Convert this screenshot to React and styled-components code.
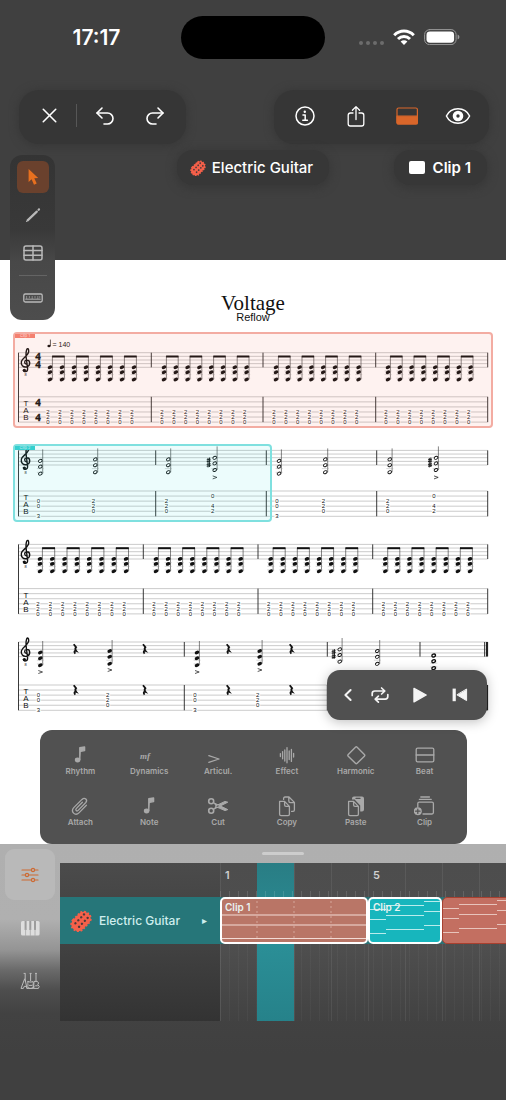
import React from 'react';
import styled, { createGlobalStyle } from 'styled-components';
import { X, Undo2, Redo2 } from 'lucide-react';

const GlobalStyle = createGlobalStyle`
  * {
    box-sizing: border-box;
  }

  body {
    margin: 0;
    background: #404040;
    color: #fff;
    font-family: Inter, "Liberation Sans", sans-serif;
  }

  button {
    border: 0;
    padding: 0;
    background: none;
    color: inherit;
    font: inherit;
    cursor: pointer;
  }

  svg {
    display: block;
  }
`;

/* ---------- icons ---------- */

const Icon = ({ size = 24, width, children, ...rest }) =>
  <svg
    width={width || size}
    height={size}
    viewBox={`0 0 ${width || size} ${size}`}
    fill="none"
    stroke="currentColor"
    strokeWidth="1.5"
    strokeLinecap="round"
    strokeLinejoin="round"
    aria-hidden="true"
    {...rest}
  >
    {children}
  </svg>

const WifiIcon = () =>
  <Icon width={22} size={16} strokeWidth="3" strokeLinecap="butt">
    <path d="M1.2 6.2 C6.8 .7 15.2 .7 20.8 6.2" />
    <path d="M5 10 C8.4 6.7 13.6 6.7 17 10" />
    <path d="M7.6 12.6 C9.6 10.8 12.4 10.8 14.4 12.6 L11 16 Z" fill="currentColor" stroke="none" />
  </Icon>

const BatteryIcon = () =>
  <Icon width={36} size={16} strokeWidth="1">
    <rect x=".6" y=".6" width="31.5" height="15" rx="5" stroke="#9a9a9a" />
    <rect x="2.5" y="2.5" width="27.6" height="11.2" rx="3.4" fill="#fff" stroke="none" />
    <path d="M33.6 5.6 C36 6.4 36 9.8 33.6 10.6 Z" fill="#9a9a9a" stroke="none" />
  </Icon>

const InfoIcon = () =>
  <Icon>
    <circle cx="12" cy="12" r="9" />
    <circle cx="11.8" cy="7.8" r="1.2" fill="currentColor" stroke="none" />
    <path d="M10 11 H12.2 V16 M9.8 16.2 H14.4" />
  </Icon>

const ShareIcon = () =>
  <Icon strokeWidth="1.3">
    <path d="M9 9 H6.4 Q4.2 9 4.2 11.2 V19.8 Q4.2 22 6.4 22 H17.6 Q19.8 22 19.8 19.8 V11.2 Q19.8 9 17.6 9 H15" />
    <path d="M12 15.5 V3 M8.4 6.2 L12 2.6 L15.6 6.2" />
  </Icon>

const PanelIcon = () =>
  <Icon stroke="#d9662a" strokeWidth="1.2">
    <rect x="2" y="4" width="20.4" height="16" rx="1.6" />
    <path d="M2 12.2 H22.4 V18.4 Q22.4 20 20.8 20 H3.6 Q2 20 2 18.4 Z" fill="#d9662a" />
  </Icon>

const EyeIcon = () =>
  <Icon width={26} size={24} strokeWidth="1.5">
    <path d="M1.4 12 C6 2.4 20 2.4 24.6 12 C20 21.6 6 21.6 1.4 12 Z" />
    <circle cx="13" cy="12" r="3.5" strokeWidth="3.6" />
  </Icon>

const CursorIcon = () =>
  <Icon>
    <path d="M7.6 4 V17 L10.6 14.3 L13 19.8 L15.7 18.6 L13.3 13.3 L17.2 12.9 Z" fill="#e8701f" stroke="none" />
  </Icon>

const PencilIcon = () =>
  <Icon strokeWidth="2.2">
    <path d="M6.6 17.4 L15.8 8.6" />
    <path d="M17.6 6.8 L18 6.4" />
    <path d="M5.4 18.6 L6.6 17.4" strokeWidth="1" />
  </Icon>

const TableIcon = () =>
  <Icon>
    <rect x="3" y="5" width="18" height="14" rx="2" />
    <path d="M3 9.6 H21 M3 14.3 H21 M12 5 V19" />
  </Icon>

const RulerIcon = () =>
  <Icon>
    <rect x="2.8" y="8" width="18.4" height="8" rx="1.4" strokeWidth="1.3" />
    <path d="M5.6 10.4 V12.6 M8.4 10.4 V11.8 M11.2 10.4 V12.6 M14 10.4 V11.8 M16.8 10.4 V12.6 M18.8 10.4 V11.8" strokeWidth=".8" opacity=".7" />
    <path d="M4.8 13.2 H19.2" strokeWidth="1.4" opacity=".6" />
  </Icon>

const GuitarIcon = ({ size }) =>
  <svg width={size} height={size} viewBox="0 0 20 20" aria-hidden="true">
    <g transform="rotate(-46 10 10)">
      <rect x="0" y="4.2" width="19.4" height="12.2" rx="5.6" fill="#f5604a" />
      <rect x="0" y="4.2" width="19.4" height="12.2" rx="5.6" fill="none" stroke="#f5604a" strokeWidth="1.8" strokeDasharray="1.7 1.5" />
      {[5, 8.8, 12.6, 16.2].map(x => [7.8, 12.4].map(y =>
        <circle key={`${x}-${y}`} cx={x} cy={y} r="1.1" fill="#4b3a3a" />
      ))}
    </g>
  </svg>

const NoteIcon = () =>
  <Icon size={22}>
    <path d="M10.8 15.4 V3.8 L15.6 3 V6.6 L11.8 7.2" fill="currentColor" strokeWidth="1.4" />
    <ellipse cx="8.6" cy="16" rx="2.8" ry="2.4" fill="currentColor" stroke="none" />
  </Icon>

const DynamicsIcon = () =>
  <Icon size={22}>
    <text x="2" y="15" fontFamily="Liberation Serif, serif" fontSize="9" fontWeight="700" fontStyle="italic" fill="currentColor" stroke="none">mf</text>
  </Icon>

const AccentIcon = () =>
  <Icon size={22} strokeWidth="1.3">
    <path d="M1.8 11.6 L12 15 L1.8 18.4" />
  </Icon>

const EffectIcon = () =>
  <Icon size={22} strokeWidth="1.3">
    <path d="M4.4 9.6 V12.6 M6.6 7.6 V14.8 M8.8 6 V17 M11 3.6 V18.8 M13.2 7 V15.6 M15.4 5.4 V17.4 M17.6 9.4 V13" />
  </Icon>

const HarmonicIcon = () =>
  <Icon size={22}>
    <rect x="5" y="5" width="12.6" height="12.6" rx="1.2" transform="rotate(45 11.3 11.3)" strokeWidth="1.4" />
  </Icon>

const BeatIcon = () =>
  <Icon size={22}>
    <rect x="2.2" y="4.2" width="17.6" height="13.6" rx="1.4" strokeWidth="1.3" />
    <path d="M2.2 11 H19.8" strokeWidth="1.3" />
  </Icon>

const AttachIcon = () =>
  <Icon size={22} strokeWidth="1.3">
    <path d="M13.4 7.2 L7.2 13.6 C6 15 7.8 16.8 9.2 15.4 L16.6 7.8 C19.2 5 15.8 1.8 13 4.4 L5 12.4 C1 16.8 6.2 21.6 10.2 17.6 L17.4 10.2" />
  </Icon>

const CutIcon = () =>
  <Icon size={22} strokeWidth="1.6">
    <circle cx="4.2" cy="6.2" r="2.5" />
    <circle cx="4.2" cy="15.8" r="2.5" />
    <path d="M6.4 7.6 L20.8 14.6 L18 15.6 L8.8 11.6 M6.4 14.4 L20.8 7.2 L18 6.4 L8.8 10.8" fill="currentColor" strokeWidth="1" />
  </Icon>

const PageFront = () =>
  <path d="M3.6 6.4 H8.6 L13.4 11.4 V19.2 Q13.4 20.6 12 20.6 H5 Q3.6 20.6 3.6 19.2 Z M8.6 6.4 V10 Q8.6 11.4 10 11.4 H13.4" strokeWidth="1.3" />

const CopyIcon = () =>
  <Icon size={22}>
    <path d="M7.6 4.4 V3.4 Q7.6 2 9 2 H13 L18.4 7.4 V15 Q18.4 16.4 17 16.4 H15.6 M12.8 2.2 V6 Q12.8 7.6 14.4 7.6 H18" strokeWidth="1.3" />
    <PageFront />
  </Icon>

const PasteIcon = () =>
  <Icon size={22}>
    <path d="M7 4.4 V3.4 Q7 1.4 9 1.4 H17 Q19 1.4 19 3.4 V14.6 Q19 16.6 17 16.6 H15.2 V10.6 L9.6 4.6 Z" fill="currentColor" stroke="none" />
    <path d="M11 3.4 H15" stroke="#515151" strokeWidth="1.2" />
    <PageFront />
  </Icon>

const ClipIcon = () =>
  <Icon size={22} strokeWidth="1.3">
    <path d="M6.8 2 H15.4 M5.4 4.4 H17.2" />
    <path d="M3.8 12 V8.6 Q3.8 7.2 5.2 7.2 H18 Q19.4 7.2 19.4 8.6 V17.6 Q19.4 19 18 19 H9" />
    <circle cx="3.8" cy="16.2" r="4" fill="currentColor" stroke="none" />
    <path d="M3.8 14 V18.4 M1.6 16.2 H6" stroke="#515151" strokeWidth="1.2" />
  </Icon>

const BackIcon = () =>
  <Icon strokeWidth="2">
    <path d="M14.6 7 L9.4 12 L14.6 17" />
  </Icon>

const LoopIcon = () =>
  <Icon strokeWidth="1.7">
    <path d="M4.2 12.4 V10.6 Q4.2 8 6.8 8 H16 M13.6 5 L16.8 8 L13.6 11" />
    <path d="M19.8 11.6 V13.6 Q19.8 16.2 17.2 16.2 H8 M10.4 13.2 L7.2 16.2 L10.4 19.2" />
  </Icon>

const PlayIcon = () =>
  <Icon>
    <path d="M6 5.4 L18.2 12 L6 18.8 Z" fill="currentColor" strokeWidth="1.4" />
  </Icon>

const RewindIcon = () =>
  <Icon>
    <rect x="4.6" y="5.6" width="3.2" height="12.6" fill="currentColor" stroke="none" />
    <path d="M18.6 6.4 V17.6 L9.2 12 Z" fill="currentColor" strokeWidth="1" />
  </Icon>

const MixerIcon = () =>
  <Icon stroke="#cd6a33" strokeWidth="1.2">
    <path d="M4 7 H20 M4 12 H20 M4 17 H20" />
    <g fill="#b8b8b8">
      <circle cx="15" cy="7" r="1.6" />
      <circle cx="9" cy="12" r="1.6" />
      <circle cx="15" cy="17" r="1.6" />
    </g>
  </Icon>

const KeysIcon = () =>
  <Icon stroke="none">
    <rect x="3" y="5" width="18.6" height="14.6" rx="1.6" fill="#dedede" />
    <path d="M7.6 5 V14 M12.3 5 V14 M17 5 V14" stroke="#9d9d9d" strokeWidth="2" strokeLinecap="butt" />
    <path d="M7.6 13 V19.6 M12.3 13 V19.6 M17 13 V19.6" stroke="#a8a8a8" strokeWidth=".8" />
  </Icon>

const GuitarsIcon = () =>
  <Icon strokeWidth="1" stroke="#bdbdbd">
    <path d="M7.2 5 V12 M12.6 5 V12 M18 5 V12 M6 4.4 H7.2 M12 4.4 H13.2 M17.4 4.4 H18.6" />
    <path d="M6.6 10 L3 19.4 H5.4 L6.2 17.4 H8.6 L9 19.4 H15.4 L16 17.8 M9 19.4 L7.2 11" />
    <path d="M10 12.6 Q9.6 15 10 16 Q9 19.2 12.4 19.4 Q16 19.2 15 16 Q15.6 14 15 12.6 Q12.6 13.8 10 12.6 Z" />
    <path d="M16.4 12.4 H19.4 Q21.6 14 19.8 15.6 Q22.4 17.4 20.4 19.4 H16 Z M11.4 16.4 H13.8 M17.6 16.8 H19.4" />
  </Icon>

/* ---------- header ---------- */

const Header = styled.header`
  height: 260px;
  padding-top: 16px;
`;

const StatusBar = styled.div`
  display: grid;
  grid-template-columns: 1fr 144px 1fr;
  height: 74px;
`;

const Clock = styled.div`
  padding: 9px 0 0 12px;
  font-size: 21px;
  line-height: 26px;
  font-weight: 600;
  text-align: center;
`;

const Island = styled.div`
  height: 43px;
  border-radius: 22px;
  background: #000;
`;

const Signals = styled.div`
  display: flex;
  justify-content: flex-end;
  gap: 9px;
  padding: 13px 46px 0 0;
`;

const Dots = styled.div`
  display: flex;
  gap: 3px;
  padding-top: 12px;

  i {
    width: 4px;
    height: 4px;
    border-radius: 2px;
    background: #6c6c6c;
  }
`;

const ToolbarRow = styled.div`
  display: flex;
  justify-content: space-between;
  padding: 0 17px 0 19px;
`;

const Toolbar = styled.div`
  display: flex;
  align-items: center;
  height: 54px;
  padding: 0 6px 3px 5px;
  border-radius: 20px;
  background: #363636;
  box-shadow: 0 1px 9px 1px #373737;
`;

const ToolButton = styled.button`
  display: flex;
  align-items: center;
  justify-content: center;
  width: ${props => props.$wide ? 51 : 50}px;
  height: 44px;
`;

const Divider = styled.div`
  width: 1px;
  height: 23px;
  margin: 0 3px 0 2px;
  background: #575757;
`;

const ChipRow = styled.div`
  display: grid;
  grid-template-columns: 1fr auto 1fr;
  align-items: start;
  padding: 6px 19px 0;
`;

const Chip = styled.button`
  display: flex;
  align-items: center;
  gap: 6px;
  height: 35px;
  padding: 0 16px 0 13px;
  border-radius: 16px;
  background: #373737;
  box-shadow: 0 2px 9px 2px #383838;
  font-size: 15px;
  font-weight: ${props => props.$end ? 600 : 500};
  grid-column: ${props => props.$end ? 3 : 2};
  justify-self: ${props => props.$end ? 'end' : 'center'};
`;

const Swatch = styled.span`
  width: 16px;
  height: 13px;
  margin: 0 2px;
  border-radius: 2px;
  background: #fff;
`;

const Palette = styled.nav`
  position: absolute;
  top: 155px;
  left: 10px;
  z-index: 2;
  display: flex;
  flex-direction: column;
  align-items: center;
  gap: 6px;
  width: 45px;
  padding: 6px 0;
  border-radius: 12px;
  background: linear-gradient(#343434, #393939 45%, #484848 65%, #4d4d4d);
  color: #b9b9b9;

  hr {
    width: 28px;
    height: 1px;
    margin: 0;
    border: 0;
    background: #646464;
  }
`;

const PaletteButton = styled.button`
  display: flex;
  align-items: center;
  justify-content: center;
  width: 32px;
  height: 32px;
  border-radius: 6px;
  background: ${props => props.$active ? '#6a412d' : 'none'};
`;

/* ---------- score ---------- */

const Sheet = styled.main`
  padding-top: 30px;
  background: #fff;
  color: #111;
`;

const Title = styled.h1`
  margin: 0;
  font: 400 21px/26px "Liberation Serif", serif;
  text-align: center;
`;

const Subtitle = styled.p`
  margin: -4px 0 9px;
  font: 400 11px/11px "Liberation Sans", sans-serif;
  text-align: center;
`;

const Systems = styled.div`
  display: flex;
  flex-direction: column;
  gap: 16px;
  padding: 0 13px;
`;

const SystemBox = styled.div`
  position: relative;

  > svg {
    width: 100%;
    height: auto;
  }
`;

const ClipFrame = styled.div`
  position: absolute;
  top: 0;
  left: 0;
  width: ${props => props.$width};
  height: 100%;
  border: 2px solid ${props => props.$line};
  border-radius: 4px;
  background: ${props => props.$fill};

  span {
    display: block;
    width: 20px;
    height: 4px;
    background: ${props => props.$tab};
    color: rgba(255, 255, 255, 0.7);
    font-size: 4px;
    line-height: 3px;
    text-align: center;
  }
`;

const STAFF_GAP = 3.65;
const TAB_GAP = 5.06;
const LEFT = 18.5;
const RIGHT = 487.7;

// tab figures as [line, fret]
const SHAPES = {
  power: { notes: [14.5, 19.5, 26.8], tab: [[3, 2], [4, 2], [5, 0]] },
  g: { notes: [10.5, 16.2, 23.2], tab: [[2, 0], [3, 0], [5, 3]], accent: 30 },
  a: { notes: [9, 14.8, 21.8], tab: [[2, 2], [3, 2], [4, 0]], accent: 28 },
  b: { notes: [7.4, 13, 19.6], tab: [[1, 0], [3, 4], [4, 2]], accent: 27, sharps: true },
};

const Clef = ({ y }) =>
  <g transform={`translate(26 ${y})`} fill="none" stroke="#111" strokeWidth="1.4" strokeLinecap="round">
    <path d="M.2 11.4 C-2 10.8 -1.8 7.6 .6 7.4 C4.4 7.2 5 12.8 .8 14.2 C-3 15 -5.4 12 -4.6 8.8 C-3.6 4.8 2.6 3 2.7 -1.4 C2.7 -4.4 1.4 -4.8 .6 -2.8 C-.6 .4 0 4 .6 8 L1.6 16 C1.8 19.4 -2.4 19.8 -2.6 17.4" />
    <circle cx="-1.6" cy="17.6" r="1.6" fill="#111" stroke="none" />
    <text x="-.4" y="23.6" fontSize="4" fill="#111" stroke="none" textAnchor="middle">8</text>
  </g>

const Figure = ({ x, y, children }) =>
  <text x={x} y={y + 2} fontSize="6" textAnchor="middle" stroke="#fff" strokeWidth="2" paintOrder="stroke">{children}</text>

const Rest = ({ x, y }) =>
  <path
    transform={`translate(${x} ${y})`}
    d="M-1 -4.8 L1.4 -1.8 C.2 -.6 .2 .4 1.6 2 C-.6 1.4 -.8 2.8 .6 4.6"
    fill="none"
    stroke="#111"
    strokeWidth="1.8"
  />

const Sharp = ({ x, y }) =>
  <path transform={`translate(${x} ${y})`} d="M-.7 -2.4 V2.4 M.8 -2.8 V2 M-2 -.6 L2 -1.2 M-2 1.2 L2 .6" stroke="#111" strokeWidth=".9" />

const Chord = ({ x, staff, tab, shape, open, whole, accent, stem, raised = 1 }) => {
  const { notes, tab: frets, accent: accentY, sharps } = SHAPES[shape];
  const stemTop = stem === undefined ? -raised : stem;
  return (
    <g>
      {!whole && <path d={`M${x + 2.4} ${staff + stemTop} V${staff + notes[2]}`} stroke="#333" strokeWidth=".6" />}
      {[18.2, 21.9, 25.5].filter(l => l < notes[2]).map(l =>
        <path key={l} d={`M${x - 3.4} ${staff + l} H${x + 3.6}`} stroke="#999" strokeWidth=".4" />
      )}
      {notes.map(n =>
        <ellipse
          key={n}
          cx={x}
          cy={staff + n}
          rx={open ? 1.9 : 2.4}
          ry={open ? 1.4 : 1.7}
          transform={`rotate(-24 ${x} ${staff + n})`}
          fill={open ? '#fff' : '#111'}
          stroke={open ? '#111' : 'none'}
          strokeWidth={whole ? 1.4 : 0.9}
        />
      )}
      {sharps && <><Sharp x={x - 6} y={staff + 10} /><Sharp x={x - 6} y={staff + 14.6} /></>}
      {accent && <path d={`M${x - 2} ${staff + accentY - 1.5} L${x + 2.2} ${staff + accentY} L${x - 2} ${staff + accentY + 1.5}`} fill="none" stroke="#111" strokeWidth=".7" />}
      {!whole && frets.map(([line, fret]) =>
        <Figure key={line} x={x - 2} y={tab + line * TAB_GAP}>{fret}</Figure>
      )}
    </g>
  );
};

// a bar of eighth notes beamed in pairs
const EighthBar = ({ start, step, staff, tab }) =>
  <g>
    {[0, 1, 2, 3, 4, 5, 6, 7].map(i =>
      <Chord key={i} x={start + i * step} staff={staff} tab={tab} shape="power" stem={3.5} />
    )}
    {[0, 2, 4, 6].map(i =>
      <path key={i} d={`M${start + i * step + 2.1} ${staff + 3.8} H${start + (i + 1) * step + 2.7}`} stroke="#111" strokeWidth="2" />
    )}
  </g>

const System = ({ height, staff, tab, bars, meter, final, frame, children }) => {
  const staffEnd = staff + 4 * STAFF_GAP;
  const tabEnd = tab + 5 * TAB_GAP;
  return (
    <SystemBox>
      <svg viewBox={`13 0 480 ${height}`} fontFamily="Liberation Sans, sans-serif" fill="#111">
        <g stroke="#a8a8a8" strokeWidth=".6">
          {[0, 1, 2, 3, 4].map(i => <path key={i} d={`M${LEFT} ${staff + i * STAFF_GAP} H${RIGHT}`} />)}
          {[0, 1, 2, 3, 4, 5].map(i => <path key={i} d={`M${LEFT} ${tab + i * TAB_GAP} H${RIGHT}`} />)}
        </g>
        <g stroke="#222" strokeWidth=".9">
          <path d={`M${LEFT} ${staff} V${tabEnd}`} />
          {bars.map(x => <path key={x} d={`M${x} ${staff} V${staffEnd} M${x} ${tab} V${tabEnd}`} />)}
          {final && <path d={`M487 ${staff} V${staffEnd} M487 ${tab} V${tabEnd}`} strokeWidth="2.2" />}
        </g>
        <Clef y={staff} />
        <g fontSize="8" textAnchor="middle">
          <text x="26" y={tab + 9}>T</text>
          <text x="26" y={tab + 16}>A</text>
          <text x="26" y={tab + 23}>B</text>
        </g>
        {meter &&
          <g fontFamily="Liberation Serif, serif" fontSize="11" fontWeight="700" textAnchor="middle" stroke="#111" strokeWidth=".4">
            <text x="38" y={staff + 7}>4</text>
            <text x="38" y={staff + 15}>4</text>
            <text x="38" y={tab + 9}>4</text>
            <text x="38" y={tab + 24}>4</text>
          </g>
        }
        {children}
      </svg>
      {frame}
    </SystemBox>
  );
};

const Score = () =>
  <Systems>
    <System
      height={96}
      staff={20.7}
      tab={64.8}
      bars={[151.3, 263, 375.7, RIGHT]}
      meter
      frame={
        <ClipFrame $width="100%" $line="#f3aca2" $tab="#f4806f" $fill="rgba(246, 110, 86, 0.09)">
          <span>Clip 1</span>
        </ClipFrame>
      }
    >
      <ellipse cx="49" cy="14" rx="1.6" ry="1.2" />
      <path d="M50.4 14 V7.6" stroke="#111" strokeWidth=".7" />
      <text x="52.5" y="14.6" fontSize="7">= 140</text>
      <EighthBar start={50} step={12} staff={20.7} tab={64.8} />
      <EighthBar start={164} step={11.8} staff={20.7} tab={64.8} />
      <EighthBar start={276} step={11.8} staff={20.7} tab={64.8} />
      <EighthBar start={388} step={11.8} staff={20.7} tab={64.8} />
    </System>
    <System
      height={78}
      staff={6.4}
      tab={47}
      bars={[155.7, 266.3, 376.7, RIGHT]}
      frame={
        <ClipFrame $width="54%" $line="#7fe0df" $tab="#35cfcf" $fill="rgba(40, 225, 220, 0.09)">
          <span>Clip 2</span>
        </ClipFrame>
      }
    >
      <Chord x={40.3} staff={6.4} tab={47} shape="g" open />
      <Chord x={95.3} staff={6.4} tab={47} shape="a" open raised={2} />
      <Chord x={168.3} staff={6.4} tab={47} shape="a" open raised={2} />
      <Chord x={214.7} staff={6.4} tab={47} shape="b" open accent raised={4} />
      <Chord x={279} staff={6.4} tab={47} shape="g" open />
      <Chord x={325.3} staff={6.4} tab={47} shape="a" open raised={2} />
      <Chord x={389.7} staff={6.4} tab={47} shape="a" open raised={2} />
      <Chord x={436} staff={6.4} tab={47} shape="b" open accent raised={4} />
    </System>
    <System height={82} staff={6.4} tab={50.6} bars={[143.3, 258, 372.7, RIGHT]}>
      <EighthBar start={40} step={12.3} staff={6.4} tab={50.6} />
      <EighthBar start={156} step={12.1} staff={6.4} tab={50.6} />
      <EighthBar start={270.7} step={12.1} staff={6.4} tab={50.6} />
      <EighthBar start={385.3} step={12.1} staff={6.4} tab={50.6} />
    </System>
    <System height={80} staff={6} tab={49} bars={[184.3, 327.3, 420, 484.6]} final>
      <Chord x={40.3} staff={6} tab={49} shape="g" accent />
      <Chord x={109.7} staff={6} tab={49} shape="a" accent raised={2} />
      <Chord x={197} staff={6} tab={49} shape="g" accent />
      <Chord x={259.7} staff={6} tab={49} shape="a" accent raised={2} />
      {[74.7, 144, 227.7, 290.7].map(x =>
        <g key={x}>
          <Rest x={x} y={13} />
          <Rest x={x} y={54} />
        </g>
      )}
      <Chord x={339.7} staff={6} tab={49} shape="b" open raised={4} />
      <Chord x={377.3} staff={6} tab={49} shape="a" open raised={2} />
      <Chord x={433.7} staff={9} tab={49} shape="g" open whole />
    </System>
  </Systems>

/* ---------- floating controls ---------- */

const ControlsArea = styled.div`
  position: relative;
  padding: 14px 39px 0 40px;
`;

const Transport = styled.div`
  position: absolute;
  right: 19px;
  bottom: calc(100% - 4px);
  display: flex;
  align-items: center;
  width: 160px;
  height: 50px;
  padding: 0 7px 0 9px;
  border-radius: 13px;
  background: #505050;
  color: #f4f4f4;
  box-shadow: 0 2px 12px rgba(0, 0, 0, 0.25);
`;

const TransportButton = styled.button`
  display: flex;
  align-items: center;
  justify-content: center;
  width: ${props => props.$narrow ? 24 : 40}px;
  height: 40px;
`;

const ActionPanel = styled.div`
  display: grid;
  grid-template-columns: repeat(6, 1fr);
  row-gap: 19px;
  padding: 14px 8px 17px 6px;
  border-radius: 12px;
  background: #515151;
`;

const Action = styled.button`
  display: flex;
  flex-direction: column;
  align-items: center;
  color: #a9a9a9;
  font-size: 8px;
  font-weight: 600;
  line-height: 10px;
`;

const ACTIONS = [
  ['Rhythm', NoteIcon],
  ['Dynamics', DynamicsIcon],
  ['Articul.', AccentIcon],
  ['Effect', EffectIcon],
  ['Harmonic', HarmonicIcon],
  ['Beat', BeatIcon],
  ['Attach', AttachIcon],
  ['Note', NoteIcon],
  ['Cut', CutIcon],
  ['Copy', CopyIcon],
  ['Paste', PasteIcon],
  ['Clip', ClipIcon],
];

/* ---------- dock ---------- */

const Dock = styled.section`
  flex: 1;
  display: grid;
  grid-template-columns: 60px 1fr;
  align-items: start;
  min-height: 256px;
  background: linear-gradient(
    #afafaf, #b0b0b0 75px, #949494 106px, #6a6a6a 126px,
    #4e4e4e 146px, #424242 170px, #404040 210px
  );
`;

const Rail = styled.nav`
  display: flex;
  flex-direction: column;
  gap: 2px;
  padding: 5px;
`;

const RailButton = styled.button`
  display: flex;
  align-items: center;
  justify-content: center;
  height: 51px;
  border-radius: 9px;
  background: ${props => props.$active ? '#b9b9b9' : 'none'};
`;

const Handle = styled.div`
  display: flex;
  justify-content: center;
  height: 19px;
  padding-top: 8px;

  i {
    width: 42px;
    height: 3px;
    border-radius: 2px;
    background: #cdcdcd;
  }
`;

const Tracks = styled.div`
  display: grid;
  grid-template-columns: 160px 1fr;
  height: 158px;
`;

const TrackHeads = styled.div`
  padding-top: 34px;
  background: linear-gradient(#4b4b4b, #464646 34px, #424242 80px, #333);
`;

const TrackHead = styled.button`
  display: flex;
  align-items: center;
  gap: 7px;
  width: 100%;
  height: 47px;
  padding: 0 13px 0 10px;
  background: #267679;
  color: #cfeeee;
  font-size: 12px;
  font-weight: 500;

  b {
    margin-left: auto;
    font: 10px/1 "DejaVu Sans", sans-serif;
  }
`;

const Timeline = styled.div`
  position: relative;
  overflow: hidden;
  background:
    repeating-linear-gradient(90deg, rgba(255, 255, 255, 0.07) 0 1px, transparent 1px 37px),
    linear-gradient(#4d4d4d, #4f4f4f 80px, #424242);
`;

// faint beat lines under the track row
const BeatLines = styled.div`
  position: absolute;
  inset: 81px 0 0;
  background: repeating-linear-gradient(90deg, rgba(255, 255, 255, 0.03) 0 1px, transparent 1px 9px);
`;

const LoopRange = styled.div`
  position: absolute;
  top: 0;
  bottom: 0;
  left: 37px;
  width: 37px;
  background: linear-gradient(#297d84, #2b8f97 50%, #26828a);
`;

const Ruler = styled.div`
  position: relative;
  display: flex;
  height: 34px;
  background:
    repeating-linear-gradient(90deg, rgba(255, 255, 255, 0.12) 0 1px, transparent 1px 9px)
    0 100% / 100% 6px no-repeat;
  color: #d0d0d0;
  font-size: 11px;
  font-weight: 600;
  line-height: 24px;

  span {
    flex: 0 0 148px;
    padding-left: 5px;
  }
`;

const Lane = styled.div`
  position: relative;
  display: flex;
  height: 47px;
  background: rgba(38, 118, 121, 0.9);
`;

const ClipBlock = styled.button`
  position: relative;
  flex: 0 0 ${props => props.$width}px;
  overflow: hidden;
  border: ${props => props.$selected ? '2px solid #fff' : '1px solid #a8402f'};
  border-radius: 5px;
  background: ${props => props.$color};
  color: #e9f2f0;
  font-size: 10px;
  font-weight: 600;
  line-height: 12px;
  text-align: left;

  span {
    position: absolute;
    top: 2px;
    left: 3px;
  }

  svg {
    position: absolute;
    top: 0;
    left: 0;
  }
`;

const RIFF = [
  [0, 10, 16], [16, 6, 54], [54, 2, 74], [54, 12, 74], [16, 16, 54],
  [0, 20, 16], [54, 26, 74], [16, 30, 54], [0, 34, 16],
];

const LongNotes = () =>
  <svg width="146" height="43" stroke="#f3dbd5" strokeWidth="1.2" aria-hidden="true">
    <path d="M0 16 H146 M0 26 H146 M0 39.5 H146" />
    <path d="M35 2 V42 M72 2 V42 M109 2 V42" strokeDasharray="2 3" opacity=".4" />
  </svg>

const RiffNotes = ({ color }) =>
  <svg width="148" height="43" stroke={color} strokeWidth="1.2" aria-hidden="true">
    {[0, 74].map(offset => RIFF.map(([from, y, to]) =>
      <path key={`${offset}-${from}-${y}`} d={`M${from + offset} ${y + 0.5} H${to + offset}`} />
    ))}
  </svg>

/* ---------- page ---------- */

const Page = styled.div`
  position: relative;
  display: flex;
  flex-direction: column;
  min-height: 100vh;
`;

const TopBar = () =>
  <Header>
    <StatusBar>
      <Clock>17:17</Clock>
      <Island />
      <Signals>
        <Dots><i /><i /><i /><i /></Dots>
        <WifiIcon />
        <BatteryIcon />
      </Signals>
    </StatusBar>
    <ToolbarRow>
      <Toolbar>
        <ToolButton aria-label="Close"><X size={25} strokeWidth={1.5} /></ToolButton>
        <Divider />
        <ToolButton aria-label="Undo"><Undo2 size={24} strokeWidth={1.6} /></ToolButton>
        <ToolButton aria-label="Redo"><Redo2 size={24} strokeWidth={1.6} /></ToolButton>
      </Toolbar>
      <Toolbar>
        <ToolButton $wide aria-label="Info"><InfoIcon /></ToolButton>
        <ToolButton $wide aria-label="Share"><ShareIcon /></ToolButton>
        <ToolButton $wide aria-label="Toggle dock"><PanelIcon /></ToolButton>
        <ToolButton $wide aria-label="View"><EyeIcon /></ToolButton>
      </Toolbar>
    </ToolbarRow>
    <ChipRow>
      <Chip><GuitarIcon size={16} />Electric Guitar</Chip>
      <Chip $end><Swatch />Clip 1</Chip>
    </ChipRow>
  </Header>

const ToolPalette = () =>
  <Palette aria-label="Tools">
    <PaletteButton $active aria-label="Select"><CursorIcon /></PaletteButton>
    <PaletteButton aria-label="Draw"><PencilIcon /></PaletteButton>
    <PaletteButton aria-label="Grid"><TableIcon /></PaletteButton>
    <hr />
    <PaletteButton aria-label="Fretboard"><RulerIcon /></PaletteButton>
  </Palette>

const Controls = () =>
  <ControlsArea>
    <Transport>
      <TransportButton $narrow aria-label="Back"><BackIcon /></TransportButton>
      <TransportButton aria-label="Loop"><LoopIcon /></TransportButton>
      <TransportButton aria-label="Play"><PlayIcon /></TransportButton>
      <TransportButton aria-label="Rewind"><RewindIcon /></TransportButton>
    </Transport>
    <ActionPanel>
      {ACTIONS.map(([label, Glyph]) =>
        <Action key={label}><Glyph />{label}</Action>
      )}
    </ActionPanel>
  </ControlsArea>

const Arranger = () =>
  <Dock>
    <Rail aria-label="Panels">
      <RailButton $active aria-label="Mixer"><MixerIcon /></RailButton>
      <RailButton aria-label="Keyboard"><KeysIcon /></RailButton>
      <RailButton aria-label="Instruments"><GuitarsIcon /></RailButton>
    </Rail>
    <div>
      <Handle><i /></Handle>
      <Tracks>
        <TrackHeads>
          <TrackHead><GuitarIcon size={22} />Electric Guitar<b>▸</b></TrackHead>
        </TrackHeads>
        <Timeline>
          <BeatLines />
          <LoopRange />
          <Ruler><span>1</span><span>5</span></Ruler>
          <Lane>
            <ClipBlock $width={148} $selected $color="#b97667"><LongNotes /><span>Clip 1</span></ClipBlock>
            <ClipBlock $width={74} $selected $color="#17b6bd"><RiffNotes color="#b9ecec" /><span>Clip 2</span></ClipBlock>
            <ClipBlock $width={148} $color="#c36f61" aria-label="Clip 3"><RiffNotes color="#e8c4bb" /></ClipBlock>
          </Lane>
        </Timeline>
      </Tracks>
    </div>
  </Dock>

const App = () =>
  <Page>
    <GlobalStyle />
    <TopBar />
    <ToolPalette />
    <Sheet>
      <Title>Voltage</Title>
      <Subtitle>Reflow</Subtitle>
      <Score />
      <Controls />
    </Sheet>
    <Arranger />
  </Page>

export default App;
